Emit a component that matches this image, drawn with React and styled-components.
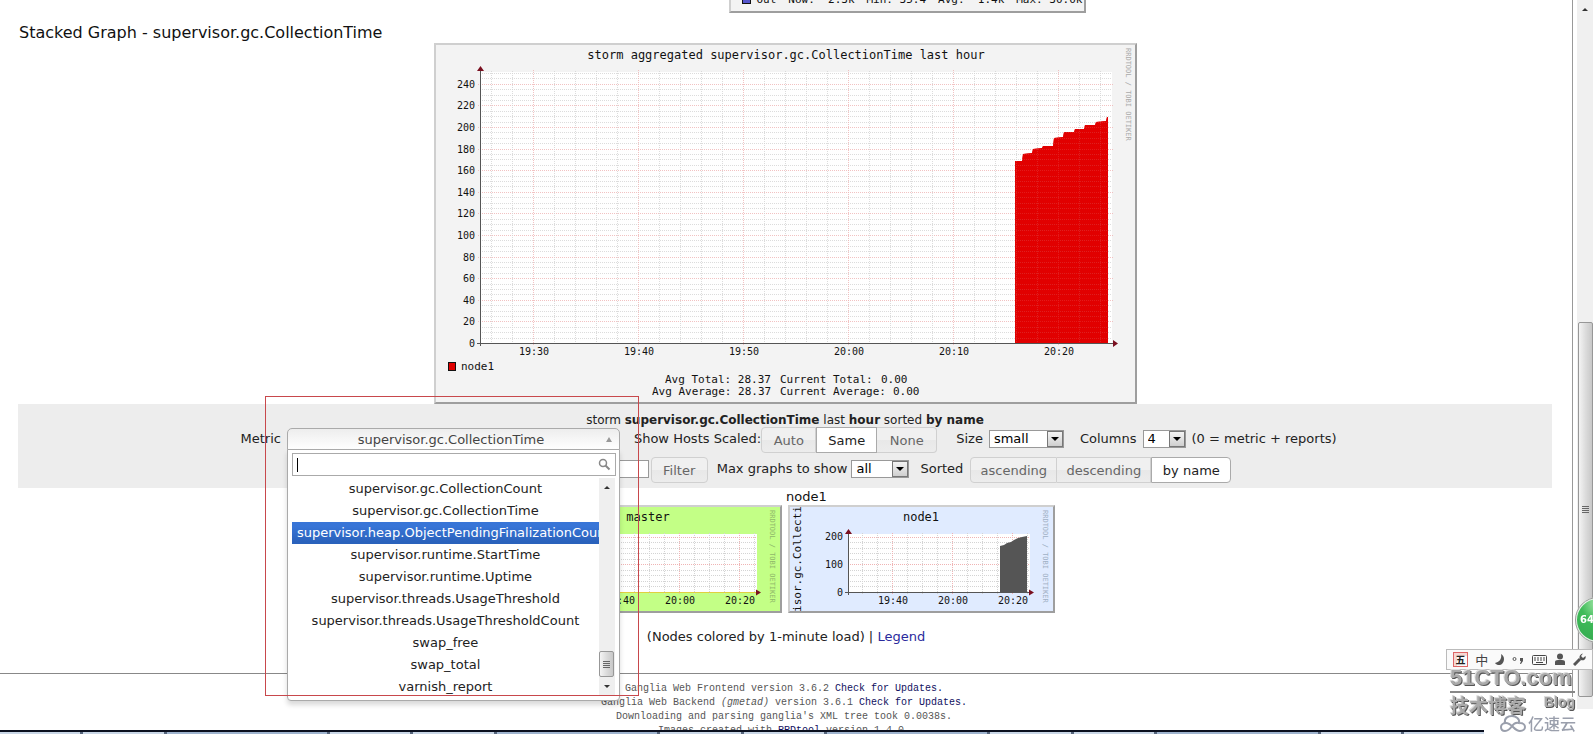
import React from "react";
import styled, { createGlobalStyle, css } from "styled-components";

const SANS = '"DejaVu Sans", Verdana, sans-serif';
const MONO = '"DejaVu Sans Mono", monospace';
const CJK = '"Noto Sans CJK SC", sans-serif';

const Global = createGlobalStyle`
  * { box-sizing: border-box; }
  body { margin: 0; background: #fff; color: #222; font: 13px/16px ${SANS}; overflow: hidden; }
  button, input, select { font-family: ${SANS}; font-size: 13px; color: inherit; }
`;

const Frame = styled.div`
  display: flex;
  flex-direction: column;
  height: 100vh;
  overflow: hidden;
`;
const Body = styled.div`
  display: flex;
  flex: 1;
  min-height: 0;
`;
const Page = styled.main`
  flex: 1;
  min-width: 0;
  overflow: hidden;
`;

/* ---------- graphs ---------- */
const GraphFrame = styled.div`
  display: flex;
  width: fit-content;
  border: 2px solid;
  border-color: #cfcfcf #9e9e9e #9e9e9e #cfcfcf;
  background: ${(p) => p.$bg || "#f3f3f3"};
  svg { display: block; }
`;
const Center = styled.div`
  display: flex;
  justify-content: center;
  padding-right: 2px;
`;
const TopStrip = styled.div`
  display: flex;
  justify-content: center;
  align-items: flex-end;
  height: 13px;
  padding-left: 242px;
  overflow: hidden;
`;
const NetLegend = styled.div`
  display: flex;
  align-items: center;
  justify-content: space-between;
  width: 353px;
  height: 20px;
  padding: 0 1px 3px 11px;
  white-space: pre;
  color: #111;
  font: 11px/14px ${MONO};
`;
const BlueKey = styled.i`
  flex: none;
  width: 9px;
  height: 9px;
  margin-right: -6px;
  border: 1px solid #111;
  background: #5555cc;
`;
const StackTitle = styled.h1`
  margin: 10px 0 0 19px;
  color: #111;
  font: 16px/20px ${SANS};
`;

const ChartText = styled.text`
  font-family: ${MONO};
  font-size: ${(p) => p.$size || 10}px;
  fill: ${(p) => p.$fill || "#111"};
  text-anchor: ${(p) => p.$anchor || "start"};
  white-space: pre;
`;
const GridLine = styled.line`
  stroke: ${(p) => (p.$major ? "#f0b4b4" : "#d4d4d4")};
  stroke-dasharray: 1 1;
  shape-rendering: crispEdges;
`;

const range = (n) => Array.from({ length: n }, (_, i) => i);

const STEPS = [
  [579, 116], [586, 116], [587, 109], [596, 108], [597, 104], [606, 103], [607, 101],
  [617, 101], [618, 93], [627, 92], [628, 87], [638, 87], [639, 84], [648, 84], [649, 80],
  [659, 80], [660, 77], [670, 76], [671, 72], [672, 72],
];

function StackedGraph() {
  const base = 298;
  const rows = range(51).map((i) => ({ y: Math.round(base - i * 5.4), major: i % 4 === 0 }));
  const cols = range(30).map((i) => ({ x: 55 + i * 21, major: i % 5 === 2 }));
  const area = `M579 ${base} ` + STEPS.map(([x, y]) => `L${x} ${y}`).join(" ") + ` L672 ${base} Z`;
  return (
    <GraphFrame>
      <svg width="699" height="357" role="img" aria-label="storm aggregated supervisor.gc.CollectionTime">
        <ChartText x="350" y="14" $size={12} $anchor="middle">storm aggregated supervisor.gc.CollectionTime last hour</ChartText>
        <rect x="44" y="27" width="632" height="271" fill="#fff" />
        <path d={area} fill="#e00000" />
        {rows.filter((r) => r.y > 26).map((r) => (
          <GridLine key={r.y} x1={r.major ? 42 : 44} x2={r.major ? 678 : 676} y1={r.y + 0.5} y2={r.y + 0.5} $major={r.major} opacity={0.8} />
        ))}
        {cols.map((c) => (
          <GridLine key={c.x} x1={c.x + 0.5} x2={c.x + 0.5} y1={c.major ? 25 : 26} y2={c.major ? 300 : 298} $major={c.major} opacity={0.8} />
        ))}
        <path d={area} fill="#e00000" opacity="0.82" />
        <path d="M44.5 301V25M41 298.5H679" stroke="#555" fill="none" />
        <path d="M41 26l3.500-5 3.500 5zM677 295l5 3.500-5 3.500z" fill="#7a1020" />
        {range(13).map((i) => (
          <ChartText key={i} x="39" y={Math.round(base - i * 21.6) + 4} $anchor="end">{i * 20}</ChartText>
        ))}
        {["19:30", "19:40", "19:50", "20:00", "20:10", "20:20"].map((t, i) => (
          <ChartText key={t} x={98 + i * 105} y="310" $anchor="middle">{t}</ChartText>
        ))}
        <rect x="12.500" y="317.500" width="7" height="8" fill="#e00000" stroke="#111" />
        <ChartText x="25" y="325" $size={11}>node1</ChartText>
        <ChartText x="229" y="338" $size={11}>Avg Total: 28.37</ChartText>
        <ChartText x="344" y="338" $size={11}>Current Total:</ChartText>
        <ChartText x="445" y="338" $size={11}>0.00</ChartText>
        <ChartText x="216" y="350" $size={11}>Avg Average: 28.37</ChartText>
        <ChartText x="344" y="350" $size={11}>Current Average:</ChartText>
        <ChartText x="457" y="350" $size={11}>0.00</ChartText>
        <ChartText $size={7} $fill="#aaa" transform="translate(690 3) rotate(90)">RRDTOOL / TOBI OETIKER</ChartText>
      </svg>
    </GraphFrame>
  );
}

function HostGraph({ name, bg, data }) {
  const rows = range(11).map((i) => ({ y: Math.round(85 - i * 5.54), major: i % 5 === 0 }));
  const cols = range(12).map((i) => ({ x: 73 + i * 15, major: i % 4 === 2 }));
  return (
    <GraphFrame $bg={bg}>
      <svg width="263" height="104" role="img" aria-label={name}>
        <ChartText x="131" y="14" $size={12} $anchor="middle">{name}</ChartText>
        <rect x="58" y="27" width="182" height="58" fill="#fff" />
        {rows.map((r) => (
          <GridLine key={r.y} x1="58" x2="240" y1={r.y + 0.5} y2={r.y + 0.5} $major={r.major} />
        ))}
        {cols.map((c) => (
          <GridLine key={c.x} x1={c.x - 0.5} x2={c.x - 0.5} y1="26" y2="87" $major={c.major} />
        ))}
        {data && <path d="M210 85V39l4-1 3-2 4-1 3-2 4-2 4-1 5-1V85z" fill="#555" />}
        <path d="M55 85.500H240" stroke={data ? "#555" : "#e0d040"} />
        {data && <path d="M58.500 88V26" stroke="#555" />}
        <path d="M55 27l3.500-5 3.500 5zM239 82.500l5 3-5 3z" fill="#7a1020" />
        {data && ["0", "100", "200"].map((t, i) => (
          <ChartText key={t} x="53" y={89 - i * 28} $anchor="end">{t}</ChartText>
        ))}
        {["19:40", "20:00", "20:20"].map((t, i) => (
          <ChartText key={t} x={103 + i * 60} y="97" $anchor="middle">{t}</ChartText>
        ))}
        {data && (
          <ChartText $size={11} $anchor="middle" transform="translate(11 52) rotate(-90)">supervisor.gc.CollectionTime</ChartText>
        )}
        <ChartText $size={7} $fill={data ? "#9fb0c4" : "#8fb86a"} transform="translate(253 3) rotate(90)">RRDTOOL / TOBI OETIKER</ChartText>
      </svg>
    </GraphFrame>
  );
}

/* ---------- control band ---------- */
const Band = styled.section`
  margin: 0 20px 0 18px;
  padding: 9px 0 5px;
  background: #ededed;
`;
const BandTitle = styled.h2`
  margin: 0;
  text-align: center;
  font: 12px/14px ${SANS};
`;
const ControlRow = styled.div`
  display: flex;
  justify-content: center;
  align-items: flex-start;
  height: 26px;
  margin-top: ${(p) => p.$top || 0}px;
  white-space: nowrap;
`;
const Field = styled.label`
  display: flex;
  align-items: center;
  gap: ${(p) => p.$gap || 8}px;
  height: 24px;
  margin-right: ${(p) => p.$after || 0}px;
`;
const Hint = styled(Field).attrs({ as: "span" })`
  width: 138px;
`;
const SelectBox = styled.span`
  position: relative;
  display: flex;
  width: ${(p) => p.$w}px;
  height: 18px;
  background: #fff;
`;
const NativeSelect = styled.select`
  appearance: none;
  width: 100%;
  height: 100%;
  padding: 0 4px;
  border: 1px solid #999;
  border-radius: 0;
  background: #fff;
  color: #000;
  line-height: 16px;
`;
const Arrow = styled.span`
  position: absolute;
  right: 1px;
  top: 1px;
  display: grid;
  place-items: center;
  width: 16px;
  height: 16px;
  border: 1px solid #777;
  background: linear-gradient(#f4f4f4, #cfcfcf);
  pointer-events: none;
  &::after {
    content: "";
    border: 4px solid transparent;
    border-top-color: #000;
    border-bottom: 0;
  }
`;
const ButtonSet = styled.div`
  display: flex;
  margin-right: ${(p) => p.$after || 0}px;
`;
const Btn = styled.button`
  height: 26px;
  width: ${(p) => p.$w}px;
  margin: 0;
  padding: 0;
  border: 1px solid #d0d0d0;
  border-left-width: ${(p) => (p.$joined ? 0 : 1)}px;
  background: linear-gradient(#f0f0f0 50%, #e8e8e8 50%, #ececec);
  color: #666;
  text-align: center;
  &:first-child { border-radius: 4px 0 0 4px; }
  &:last-child { border-radius: 0 4px 4px 0; }
  &:only-child { border-radius: 4px; }
  ${(p) => p.$on && css`
    border: 1px solid #aaa;
    background: #fff;
    color: #222;
  `}
`;
const TextInput = styled.input`
  width: 310px;
  height: 18px;
  border: 1px solid #999;
  background: #fff;
`;

const Chosen = styled.div`
  position: relative;
  z-index: 5;
  width: 333px;
  height: 22px;
  margin: 1px 14px 0 0;
`;
const ChosenButton = styled.button`
  display: flex;
  align-items: center;
  width: 100%;
  height: 22px;
  padding: 0 7px 0 8px;
  border: 1px solid #aaa;
  border-radius: 5px 5px 0 0;
  background: linear-gradient(#ededed, #fff);
  color: #444;
  span { flex: 1; }
  &::after {
    content: "";
    border: 3px solid transparent;
    border-top: 0;
    border-bottom: 5px solid #999;
  }
`;
const Drop = styled.div`
  position: absolute;
  top: 21px;
  left: 0;
  width: 100%;
  padding: 3px 3px 4px 4px;
  border: 1px solid #aaa;
  border-radius: 0 0 4px 4px;
  background: #fff;
  box-shadow: 0 4px 5px rgba(0, 0, 0, 0.15);
`;
const SearchBox = styled.div`
  display: flex;
  align-items: center;
  height: 23px;
  padding: 0 4px;
  border: 1px solid #aaa;
  input {
    flex: 1;
    min-width: 0;
    border: 0;
    padding: 0;
    outline: 0;
    background: none;
  }
`;
const Caret = styled.i`
  width: 1px;
  height: 14px;
  background: #000;
`;
const ListWrap = styled.div`
  display: flex;
  height: 218px;
  margin-top: 2px;
  overflow: hidden;
`;
const Options = styled.ul`
  flex: 1;
  min-width: 0;
  margin: 0;
  padding: 0;
  list-style: none;
`;
const Option = styled.li`
  height: 22px;
  padding: 0 5px;
  overflow: hidden;
  text-align: center;
  white-space: nowrap;
  line-height: 22px;
  ${(p) => p.$on && css`
    background: linear-gradient(#3875d7 20%, #2a62bc 90%);
    color: #fff;
  `}
`;
const ListBar = styled.div`
  display: flex;
  flex-direction: column;
  align-items: center;
  width: 16px;
  margin-right: 1px;
  background: #efefef;
`;
const Spacer = styled.span`
  flex: 1;
`;
const Tri = styled.i`
  margin: 8px 0;
  border: 3px solid transparent;
  ${(p) => (p.$up
    ? "border-top: 0; border-bottom-color: #333;"
    : "border-bottom: 0; border-top-color: #333;")}
`;
const Thumb = styled.span`
  display: flex;
  flex-direction: column;
  align-items: center;
  justify-content: center;
  gap: 1px;
  width: 15px;
  height: ${(p) => p.$h}px;
  border: 1px solid #979797;
  border-radius: 2px;
  background: linear-gradient(90deg, #f4f4f4, #dcdcdc 50%, #c8c8c8);
  i { width: 7px; height: 1px; background: #666; }
`;

const METRICS = [
  "supervisor.gc.CollectionCount",
  "supervisor.gc.CollectionTime",
  "supervisor.heap.ObjectPendingFinalizationCount",
  "supervisor.runtime.StartTime",
  "supervisor.runtime.Uptime",
  "supervisor.threads.UsageThreshold",
  "supervisor.threads.UsageThresholdCount",
  "swap_free",
  "swap_total",
  "varnish_report",
];

const Highlight = styled.div`
  position: absolute;
  z-index: 6;
  left: -22px;
  top: -32px;
  width: 374px;
  height: 300px;
  border: 1px solid #c8484c;
  pointer-events: none;
`;

function MetricPicker() {
  return (
    <Chosen>
      <ChosenButton type="button" aria-expanded="true">
        <span>supervisor.gc.CollectionTime</span>
      </ChosenButton>
      <Drop>
        <SearchBox>
          <Caret />
          <input aria-label="Search metrics" />
          <svg width="13" height="13" viewBox="0 0 13 13" fill="none" stroke="#888">
            <circle cx="5" cy="5" r="3.500" strokeWidth="1.500" />
            <path d="M7.500 7.500l4 4" strokeWidth="2" />
          </svg>
        </SearchBox>
        <ListWrap>
          <Options role="listbox">
            {METRICS.map((m, i) => (
              <Option key={m} role="option" aria-selected={i === 2} $on={i === 2}>{m}</Option>
            ))}
          </Options>
          <ListBar>
            <Tri $up />
            <Spacer />
            <Thumb $h={26}><i /><i /><i /><i /></Thumb>
            <Tri />
          </ListBar>
        </ListWrap>
      </Drop>
      <Highlight />
    </Chosen>
  );
}

function Select({ value, width }) {
  return (
    <SelectBox $w={width}>
      <NativeSelect defaultValue={value}>
        <option>{value}</option>
      </NativeSelect>
      <Arrow />
    </SelectBox>
  );
}

/* ---------- lower page ---------- */
const Tiles = styled.div`
  display: grid;
  grid-template-columns: 267px 267px;
  justify-content: center;
  gap: 6px;
  padding-right: 2px;
`;
const Tile = styled.div`
  line-height: 17px;
  color: #111;
`;
const TileName = styled.div`
  height: 17px;
  margin-left: -2px;
`;
const ColorNote = styled.p`
  margin: 16px 0 28px;
  text-align: center;
`;
const Link = styled.a`
  color: ${(p) => p.$c || "#2a2a9c"};
  text-decoration: none;
`;
const Rule = styled.hr`
  height: 1px;
  margin: 0;
  border: 0;
  background: #888;
`;
const Footer = styled.footer`
  padding: 8px 4px 0 0;
  color: #555;
  text-align: center;
  font: 10px/14px "Liberation Mono", monospace;
  div { white-space: pre; }
`;

/* ---------- window chrome ---------- */
const Gutter = styled.div`
  width: 5px;
  margin-bottom: 33px;
  border-left: 1px solid #999;
`;
const WindowBar = styled.div`
  display: flex;
  flex-direction: column;
  align-items: center;
  width: 16px;
  margin-bottom: 21px;
  background: #f0f0f0;
`;
const WindowThumb = styled(Thumb)`
  height: auto;
  flex: 376;
  margin-bottom: 12px;
`;
const TopSpace = styled.span`
  flex: 305;
`;
const TaskBar = styled.div`
  display: flex;
  gap: 3px;
  height: 4px;
  margin-right: 109px;
  border-top: 2px solid #0a0f1e;
  background: #56657c;
  i { flex: 1; background: #c9d6e6; }
  i:nth-child(3n) { flex: 2; background: #9fb4cf; }
`;
const Dock = styled.div`
  position: fixed;
  z-index: 10;
  right: 0;
  bottom: 0;
  width: 147px;
`;
const ImeBar = styled.div`
  display: flex;
  align-items: center;
  justify-content: space-between;
  height: 21px;
  padding: 0 6px;
  border: 1px solid #bbb;
  background: #fafafa;
  color: #444;
  font: 13px/18px ${CJK};
  svg { display: block; }
`;
const ImeLogo = styled.span`
  width: 15px;
  height: 15px;
  border: 1px solid #d66;
  color: #222;
  font: bold 10px/13px ${CJK};
  text-align: center;
  box-shadow: inset 3px 3px 0 #f6d8d4;
`;
const Mark = styled.div`
  margin: -8px 18px 0 4px;
  color: #aaa;
  text-shadow: 1px 1px 0 #555, -1px -1px 0 #ddd;
`;
const MarkName = styled.div`
  height: 31px;
  border-bottom: 2px solid #888;
  font: bold 22px/32px "Liberation Sans", sans-serif;
  white-space: nowrap;
`;
const MarkSub = styled.div`
  display: flex;
  justify-content: space-between;
  height: 22px;
  font: bold 19px/24px ${CJK};
  small { font: bold 14px/18px "Liberation Sans", sans-serif; }
`;
const Cloud = styled.div`
  display: flex;
  justify-content: flex-end;
  align-items: center;
  gap: 2px;
  height: 20px;
  margin: -2px 17px 1px 0;
  color: #9a9fac;
  font: 500 16px/20px ${CJK};
`;
const Ball = styled.div`
  position: fixed;
  z-index: 9;
  right: -28px;
  bottom: 91px;
  width: 46px;
  height: 46px;
  padding-left: 3px;
  border: 2px solid #e8f4ea;
  border-radius: 50%;
  outline: 1px solid #999;
  outline-offset: -1px;
  background: radial-gradient(circle at 50% 10%, #a8e8ac, #3fbb59 40%, #34aa50);
  color: #fff;
  font: bold 10px/42px ${SANS};
`;

export default function App() {
  return (
    <Frame>
      <Global />
      <Body>
        <Page>
          <TopStrip>
            <GraphFrame>
              <NetLegend>
                <BlueKey />
                <span>Out</span>
                <span>{"Now:  2.3k"}</span>
                <span>Min: 35.4</span>
                <span>{"Avg:  1.4k"}</span>
                <span>Max: 30.0k</span>
              </NetLegend>
            </GraphFrame>
          </TopStrip>
          <StackTitle>Stacked Graph - supervisor.gc.CollectionTime</StackTitle>
          <Center><StackedGraph /></Center>
          <Band>
            <BandTitle>
              storm <b>supervisor.gc.CollectionTime</b> last <b>hour</b> sorted <b>by name</b>
            </BandTitle>
            <ControlRow>
              <Field $after={6}>Metric</Field>
              <MetricPicker />
              <Field>Show Hosts Scaled:</Field>
              <ButtonSet $after={19}>
                <Btn $w={55}>Auto</Btn>
                <Btn $w={61} $on>Same</Btn>
                <Btn $w={60} $joined>None</Btn>
              </ButtonSet>
              <Field $gap={6} $after={16}>Size <Select value="small" width={75} /></Field>
              <Field $gap={6} $after={6}>Columns <Select value="4" width={43} /></Field>
              <Hint>(0 = metric + reports)</Hint>
            </ControlRow>
            <ControlRow $top={4}>
              <Field $after={2}><TextInput aria-label="Host filter" /></Field>
              <ButtonSet $after={9}><Btn $w={57}>Filter</Btn></ButtonSet>
              <Field $gap={4} $after={11}>Max graphs to show <Select value="all" width={58} /></Field>
              <Field $after={7}>Sorted</Field>
              <ButtonSet>
                <Btn $w={87}>ascending</Btn>
                <Btn $w={94} $joined>descending</Btn>
                <Btn $w={80} $on>by name</Btn>
              </ButtonSet>
            </ControlRow>
          </Band>
          <Tiles>
            <Tile>
              <TileName />
              <HostGraph name="master" bg="#c3ff86" />
            </Tile>
            <Tile>
              <TileName>node1</TileName>
              <HostGraph name="node1" bg="#e0ebff" data />
            </Tile>
          </Tiles>
          <ColorNote>
            (Nodes colored by 1-minute load) | <Link href="#legend">Legend</Link>
          </ColorNote>
          <Rule />
          <Footer>
            <div>Ganglia Web Frontend version 3.6.2 <Link $c="#101060" href="#frontend">Check for Updates.</Link></div>
            <div>Ganglia Web Backend <i>(gmetad)</i> version 3.6.1 <Link $c="#101060" href="#backend">Check for Updates.</Link></div>
            <div>Downloading and parsing ganglia's XML tree took 0.0038s.</div>
            <div>Images created with <Link $c="#101060" href="#rrdtool">RRDtool</Link> version 1.4.0.</div>
          </Footer>
        </Page>
        <Gutter />
        <WindowBar>
          <Tri $up />
          <TopSpace />
          <WindowThumb><i /><i /><i /><i /></WindowThumb>
        </WindowBar>
      </Body>
      <TaskBar>{range(14).map((i) => <i key={i} />)}</TaskBar>
      <Ball>64</Ball>
      <Dock>
        <ImeBar>
          <ImeLogo>五</ImeLogo>
          <span>中</span>
          <svg width="10" height="12" viewBox="0 0 10 12"><path d="M6 0c1 4-1 8-6 9 3 4 9 2 9-4C9 3 8 1 6 0z" fill="#555" /></svg>
          <svg width="12" height="10" viewBox="0 0 12 10"><circle cx="2.500" cy="4" r="1.500" fill="none" stroke="#555" /><path d="M8 3h3v3l-2 3H8l1-3H8z" fill="#555" /></svg>
          <svg width="15" height="10" viewBox="0 0 15 10"><rect x=".5" y=".5" width="14" height="9" rx="1" fill="none" stroke="#444" /><path d="M2 3h11M2 5h11" stroke="#444" strokeDasharray="2 1" /><path d="M4 7.500h7" stroke="#444" /></svg>
          <svg width="12" height="13" viewBox="0 0 12 13"><circle cx="6" cy="3.500" r="3" fill="#555" /><path d="M1 12V9q0-2 3-2h4q3 0 3 2v3z" fill="#555" /></svg>
          <svg width="13" height="13" viewBox="0 0 13 13"><path d="M1 12l6-6" stroke="#555" strokeWidth="3" /><path d="M10 .5L8 3l2 2 2.500-2c1 3-2 5-4.500 4S6 1 10 .5z" fill="#555" /></svg>
        </ImeBar>
        <Mark>
          <MarkName>51CTO.com</MarkName>
          <MarkSub>技术博客<small>Blog</small></MarkSub>
        </Mark>
        <Cloud>
          <svg width="26" height="17" viewBox="0 0 26 17" fill="none" stroke="#9a9fac" strokeWidth="2">
            <path d="M5 8C4 3 8 1 12 1s8 3 7 7c-3-1-5 0-7 3s-4 5-7 5-4-2-4-4 2-4 5-4 5 2 7 4 4 4 7 4 5-2 5-4-2-4-5-4" />
          </svg>
          亿速云
        </Cloud>
      </Dock>
    </Frame>
  );
}
